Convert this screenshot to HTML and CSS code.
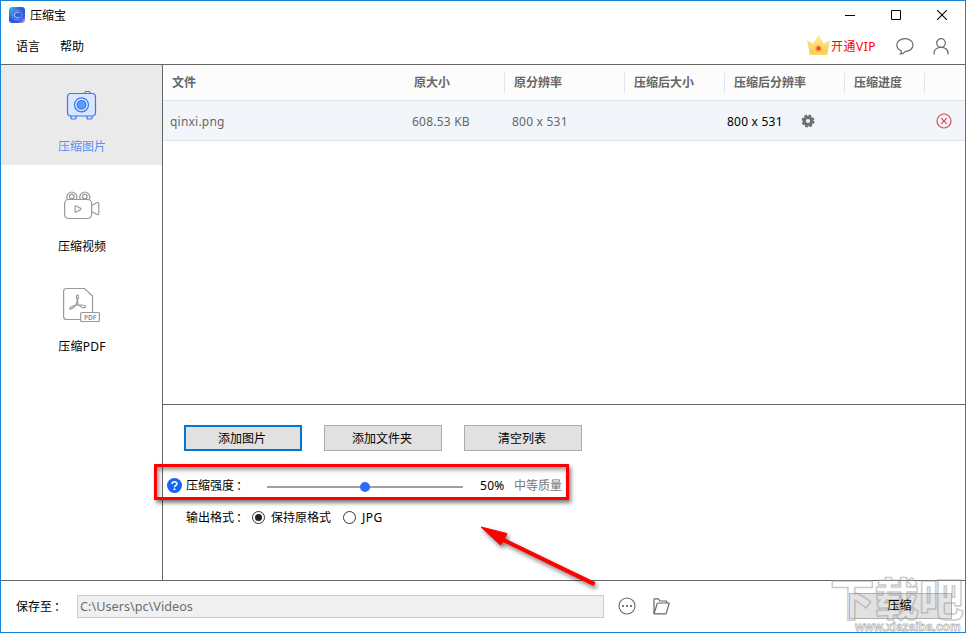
FILE: index.html
```html
<!DOCTYPE html>
<html lang="zh-CN">
<head>
  <meta charset="UTF-8">
  <meta name="viewport" content="width=device-width, initial-scale=1.0">
  <title>压缩宝</title>
  <link rel="stylesheet" href="styles.css">
</head>
<body>
  <div class="window">

    <header class="titlebar">
      <svg class="app-logo" width="16" height="16" viewBox="0 0 16 16">
        <defs>
          <linearGradient id="logoFill" x1="0" y1="0" x2="1" y2="1">
            <stop offset="0" stop-color="#39d8f2"/>
            <stop offset=".35" stop-color="#2463dc"/>
            <stop offset=".75" stop-color="#3457d8"/>
            <stop offset="1" stop-color="#e8a8f0"/>
          </linearGradient>
        </defs>
        <rect width="16" height="16" rx="3" fill="url(#logoFill)"/>
        <circle cx="8" cy="8" r="5" fill="none" stroke="#7fa5f5" stroke-width=".9"/>
        <path d="M10.2 6.3A2.8 2.8 0 1 0 10.2 9.7" fill="none" stroke="#c5dbff" stroke-width="1"/>
      </svg>
      <span class="app-name">压缩宝</span>
      <div class="window-buttons">
        <svg width="10" height="10" viewBox="0 0 10 10"><path d="M0 5.5H10" stroke="#000"/></svg>
        <svg width="10" height="10" viewBox="0 0 10 10"><path d="M.5.5H9.5V9.5H.5Z" fill="none" stroke="#000"/></svg>
        <svg width="10" height="10" viewBox="0 0 10 10"><path d="M0 0L10 10M10 0L0 10" stroke="#000" stroke-width="1.1"/></svg>
      </div>
    </header>

    <nav class="menubar">
      <span class="menu-item">语言</span>
      <span class="menu-item">帮助</span>
      <div class="account">
        <svg class="crown" width="23" height="21" viewBox="0 0 23 21">
          <defs>
            <linearGradient id="gold" x1="0" y1="0" x2="0" y2="1">
              <stop offset="0" stop-color="#fff09a"/>
              <stop offset="1" stop-color="#f8cb55"/>
            </linearGradient>
          </defs>
          <path d="M0 5L6 8.500L11.500 0L17 8.500L23 5L20.500 18H2.500Z" fill="url(#gold)"/>
          <path d="M2.500 17.500H20.500V20H2.500Z" fill="#f9d467"/>
          <circle cx="11.500" cy="13.500" r="3.200" fill="#fba543"/>
          <circle cx="11.500" cy="13.500" r="1.900" fill="#f04a1c"/>
        </svg>
        <span class="vip">开通VIP</span>
        <svg class="chat" width="18" height="17" viewBox="0 0 18 17">
          <path d="M5.300 12.800C2.500 11.700.8 9.500.8 7C.8 3.500 4.300.7 9 .7S17 3.500 17 7S13.700 13.200 9.500 13.400C8.400 15 6.800 15.900 4.400 15.900C5.200 15 5.500 14 5.300 12.800Z" fill="none" stroke="#6a6a6a" stroke-width="1.200"/>
        </svg>
        <svg class="user" width="16" height="17" viewBox="0 0 16 17">
          <circle cx="8" cy="5" r="4.300" fill="none" stroke="#6a6a6a" stroke-width="1.200"/>
          <path d="M1 16.500V15.500C1 11.500 4 9.300 8 9.300S15 11.500 15 15.500V16.500" fill="none" stroke="#6a6a6a" stroke-width="1.200"/>
        </svg>
      </div>
    </nav>

    <div class="content">
      <aside class="sidebar">
        <div class="side-item active">
          <svg width="38" height="36" viewBox="0 0 38 36" fill="none" stroke="#3b76f5" stroke-width="1.200">
            <path d="M23 5V4.500Q23 3.500 24 3.500H27Q28 3.500 28 4.500V5"/>
            <path d="M9 28V30Q9 31 10 31H13Q14 31 14 30V28M25 28V30Q25 31 26 31H29Q30 31 30 30V28" fill="#d9e6fd"/>
            <rect x="5.500" y="5.500" width="28" height="22.500" rx="3.500" fill="#d9e6fd"/>
            <circle cx="19.500" cy="16.800" r="7"/>
            <circle cx="19.500" cy="16.800" r="4.300" fill="#5c9afc"/>
          </svg>
          <span>压缩图片</span>
        </div>
        <div class="side-item">
          <svg width="38" height="36" viewBox="0 0 38 36" fill="none" stroke="#999" stroke-width="1.200">
            <path d="M5.300 11.200A5 5 0 1 1 14.300 11.200M18.300 11.200A5 5 0 1 1 27.300 11.200"/>
            <circle cx="9.800" cy="8.500" r="2.300"/>
            <circle cx="22.800" cy="8.500" r="2.300"/>
            <rect x="2.600" y="11.500" width="27" height="19" rx="4"/>
            <path d="M29.600 17.500L35 14.500Q36.800 14 36.800 16V25Q36.800 27 35 26.500L29.600 23.500"/>
            <path d="M13 18.700Q13 17.300 14.300 18L18.500 20.300Q19.500 21 18.500 21.700L14.300 24Q13 24.700 13 23.300Z"/>
          </svg>
          <span>压缩视频</span>
        </div>
        <div class="side-item pdf">
          <svg width="38" height="36" viewBox="0 0 38 36" fill="none" stroke="#999" stroke-width="1.200">
            <path d="M18.500 33.500H4.600Q1.600 33.500 1.600 30.500V5.500Q1.600 2.500 4.600 2.500H22.500L30.500 10V26"/>
            <path d="M15.300 14.500C14.700 12.500 13.500 9.200 15.400 9C17.300 9.200 16 12.500 15.300 14.500C15 17 14 19.500 11.500 21.500C9.500 23.200 7.800 23.600 7.600 22.500C7.700 21 10.500 20 15.300 19.200C20 18.700 23.400 19 23.600 20.600C23.500 22.500 20.500 22 18.200 20.300C16.300 18.700 15.500 17 15.300 14.500"/>
            <rect x="18.700" y="26.500" width="18.700" height="9" rx="1" fill="#fff"/>
            <text class="pdf-mark" x="22" y="33.500">PDF</text>
          </svg>
          <span>压缩PDF</span>
        </div>
      </aside>

      <main class="workspace">
        <div class="file-list">
          <div class="row head">
            <span>文件</span>
            <span class="size">原大小</span>
            <span class="sep">原分辨率</span>
            <span class="sep">压缩后大小</span>
            <span class="sep">压缩后分辨率</span>
            <span class="sep">压缩进度</span>
            <span class="sep"></span>
          </div>
          <div class="row file">
            <span>qinxi.png</span>
            <span>608.53 KB</span>
            <span>800 x 531</span>
            <span></span>
            <span class="new-size">800 x 531
              <svg width="14" height="14" viewBox="0 0 14 14">
                <circle cx="7" cy="7" r="3.700" fill="none" stroke="#6f6f6f" stroke-width="3.200"/>
                <circle cx="7" cy="7" r="5.500" fill="none" stroke="#6f6f6f" stroke-width="2" stroke-dasharray="2.600 1.720"/>
              </svg>
            </span>
            <span></span>
            <span class="remove">
              <svg width="16" height="16" viewBox="0 0 16 16" fill="none" stroke="#d9494f" stroke-width="1.200">
                <circle cx="8" cy="8" r="7"/>
                <path d="M5.200 5.200L10.800 10.800M10.800 5.200L5.200 10.800"/>
              </svg>
            </span>
          </div>
        </div>

        <div class="options">
          <div class="actions">
            <button class="btn focused">添加图片</button>
            <button class="btn">添加文件夹</button>
            <button class="btn">清空列表</button>
          </div>
          <div class="strength">
            <svg class="help" width="15" height="15" viewBox="0 0 15 15">
              <circle cx="7.500" cy="7.500" r="7.500" fill="#1466f5"/>
              <path d="M5.100 6C5.100 3 9.900 3 9.900 5.900C9.900 7.500 7.500 7.400 7.500 9.300" fill="none" stroke="#fff" stroke-width="1.600"/>
              <circle cx="7.500" cy="11.300" r="1" fill="#fff"/>
            </svg>
            <span class="label">压缩强度<span class="colon">：</span></span>
            <div class="slider"><div class="knob"></div></div>
            <span class="percent">50%</span>
            <span class="quality">中等质量</span>
          </div>
          <div class="format">
            <span class="label">输出格式<span class="colon">：</span></span>
            <span class="radio checked"></span>
            <span class="keep">保持原格式</span>
            <span class="radio"></span>
            <span class="jpg">JPG</span>
          </div>
        </div>
      </main>
    </div>

    <footer class="footer">
      <span class="save-label">保存至<span class="colon">：</span></span>
      <div class="path">C:\Users\pc\Videos</div>
      <svg class="more" width="18" height="18" viewBox="0 0 18 18">
        <circle cx="9" cy="9" r="8" fill="none" stroke="#666" stroke-width="1.100"/>
        <path d="M4 8H6V10H4ZM8 8H10V10H8ZM12 8H14V10H12Z" fill="#777"/>
      </svg>
      <svg class="folder" width="17" height="17" viewBox="0 0 17 17" fill="none" stroke="#666" stroke-width="1.200" stroke-linejoin="round">
        <path d="M1 15.500V1.500Q1 .8 1.700.8H5.300L7 3H13Q13.700 3 13.700 3.700V5"/>
        <path d="M1 15.800L4.200 5.600Q4.400 5 5 5H15.500Q16.300 5 16.100 5.700L13.300 15.200Q13.100 15.800 12.500 15.800Z"/>
      </svg>
      <button class="btn compress"><span>压缩</span></button>
    </footer>

    <!-- annotations over the window -->
    <div class="highlight"></div>
    <svg class="arrow" width="130" height="80" viewBox="0 0 130 80">
      <path d="M11 6L37 12.500L34.500 17.800L125 61.500L123.500 64.500L33 20.500L30.500 24Z" fill="#f00" stroke="#f00" stroke-linejoin="round"/>
    </svg>
    <div class="watermark">
      <div class="mark-name">下载吧</div>
      <div class="mark-url">www.xiazaiba.com</div>
    </div>
  </div>
</body>
</html>
```
FILE: styles.css
```css
* {
  box-sizing: border-box;
}

body {
  margin: 0;
  font-family: "Noto Sans", "Noto Sans CJK SC", sans-serif;
  font-size: 12px;
  line-height: 16px;
  color: #000;
}

svg {
  display: block;
  flex: none;
}

.window {
  position: relative;
  display: flex;
  flex-direction: column;
  width: 966px;
  height: 633px;
  border: 1px solid #1883d7;
  background: #fff;
  overflow: hidden;
}

.titlebar {
  display: flex;
  align-items: center;
  height: 28px;
  padding: 0 18px 0 8px;
}

.app-name {
  margin-left: 5px;
  padding-top: 2px;
}

.window-buttons {
  display: flex;
  gap: 36px;
  margin-left: auto;
}

.menubar {
  display: flex;
  align-items: center;
  height: 36px;
  padding: 0 16px 0 15px;
  border-bottom: 1px solid #666;
}

.menu-item {
  margin-right: 20px;
  padding-top: 1px;
}

.account {
  display: flex;
  align-items: center;
  margin-left: auto;
}

.crown {
  margin-bottom: 2px;
}

.vip {
  margin-left: 1px;
  padding-top: 1px;
  letter-spacing: .5px;
  color: #f00;
}

.chat {
  margin-left: 20px;
}

.user {
  margin-left: 19px;
}

.content {
  display: flex;
  height: 516px;
  border-bottom: 1px solid #666;
}

.sidebar {
  width: 162px;
  border-right: 1px solid #666;
}

.side-item {
  display: flex;
  flex-direction: column;
  align-items: center;
  height: 100px;
  padding-top: 23px;
}

.side-item svg {
  margin-right: 2px;
}

.side-item span {
  margin-top: 15px;
  margin-left: 1px;
}

.side-item.active {
  background: #eaeaea;
  color: #5b8ff9;
}

.side-item.pdf {
  padding-top: 21px;
}

.side-item.pdf span {
  margin-top: 17px;
  letter-spacing: .3px;
}

.pdf-mark {
  font: bold 6.500px "Noto Sans", sans-serif;
  fill: #999;
  stroke: none;
}

.workspace {
  flex: 1;
}

.file-list {
  height: 340px;
  border-bottom: 1px solid #666;
}

.row {
  display: grid;
  grid-template-columns: 241px 100px 120px 100px 120px 80px 1fr;
  align-items: center;
  border-bottom: 1px solid #dfe6ea;
}

.head {
  height: 36px;
  background: #fcfcfc;
  color: #666;
  font-weight: 700;
}

.head span {
  height: 19px;
  padding: 2px 0 0 9px;
}

.head .size {
  padding-left: 10px;
}

.head .sep {
  border-left: 1px solid #dfe6ea;
}

.file {
  height: 40px;
  padding-top: 1px;
  background: #f2f6fa;
  color: #666;
  letter-spacing: .22px;
}

.file span {
  padding: 1px 0 0 8px;
}

.file span:first-child {
  padding-left: 7px;
}

.file .new-size {
  display: flex;
  align-items: center;
  gap: 18px;
  padding-left: 3px;
  color: #000;
}

.new-size svg {
  margin-bottom: 2px;
}

.file .remove {
  padding: 0 0 1px 12px;
}

.options {
  padding: 20px 21px;
}

.actions {
  display: flex;
  gap: 22px;
}

.btn {
  width: 118px;
  height: 26px;
  padding: 1px 2px 0 0;
  border: 1px solid #adadad;
  background: #e1e1e1;
  font: inherit;
  color: #000;
}

.btn.focused {
  border: 2px solid #0078d7;
}

.strength {
  display: flex;
  align-items: center;
  height: 20px;
  margin: 24px 0 0 -17px;
}

.strength > span {
  padding-top: 2px;
}

.strength .label {
  width: 81px;
  margin-left: 4px;
}

.colon {
  margin-left: 2px;
}

.slider {
  display: flex;
  align-items: center;
  justify-content: center;
  width: 196px;
  height: 2px;
  margin-top: 4px;
  background: #a0a0a0;
}

.knob {
  width: 10px;
  height: 10px;
  border-radius: 50%;
  background: #2b6cff;
}

.percent {
  width: 34px;
  margin-left: 17px;
  letter-spacing: .3px;
}

.quality {
  color: #777;
}

.format {
  display: flex;
  align-items: center;
  height: 20px;
  margin: 12px 0 0 2px;
}

.format .label {
  width: 66px;
  padding-top: 2px;
}

.radio {
  display: flex;
  align-items: center;
  justify-content: center;
  width: 13px;
  height: 13px;
  border: 1px solid #333;
  border-radius: 50%;
}

.radio.checked::after {
  content: "";
  width: 7px;
  height: 7px;
  border-radius: 50%;
  background: #222;
}

.radio + span {
  margin-left: 6px;
  padding-top: 2px;
}

.keep {
  margin-right: 12px;
}

.jpg {
  letter-spacing: .5px;
}

.footer {
  display: flex;
  align-items: center;
  height: 51px;
  padding: 0 13px 0 15px;
}

.save-label {
  width: 61px;
  padding-top: 1px;
}

.path {
  width: 527px;
  height: 23px;
  padding: 2px;
  border: 1px solid #ccc;
  background: #f0f0f0;
  color: #6d6d6d;
  font-size: 12.700px;
}

.more {
  margin: 0 0 2px 14px;
}

.folder {
  margin: 0 0 1px 17px;
}

.compress {
  width: 103px;
  margin: 0 0 2px auto;
}

.compress span {
  position: relative;
  z-index: 1;
}

.highlight {
  position: absolute;
  left: 153px;
  top: 463px;
  width: 415px;
  height: 36px;
  border: 3px solid #f00;
  box-shadow: 2px 3px 4px rgba(0, 0, 0, .5), inset 2px 3px 4px rgba(0, 0, 0, .4);
}

.arrow {
  position: absolute;
  left: 469px;
  top: 520px;
  filter: drop-shadow(2px 3px 2px rgba(0, 0, 0, .5));
}

.watermark {
  position: absolute;
  left: 829px;
  top: 575px;
  width: 140px;
  color: rgba(255, 255, 255, .15);
  white-space: nowrap;
}

.mark-name {
  font-size: 44.500px;
  font-weight: 900;
  line-height: 46px;
  -webkit-text-stroke: 1.500px rgba(150, 150, 150, .5);
}

.mark-url {
  margin: -3px 0 0 25px;
  font: bold 12px/16px "Liberation Sans", sans-serif;
  color: rgba(255, 255, 255, .7);
  -webkit-text-stroke: .800px rgba(140, 140, 140, .6);
}
```
